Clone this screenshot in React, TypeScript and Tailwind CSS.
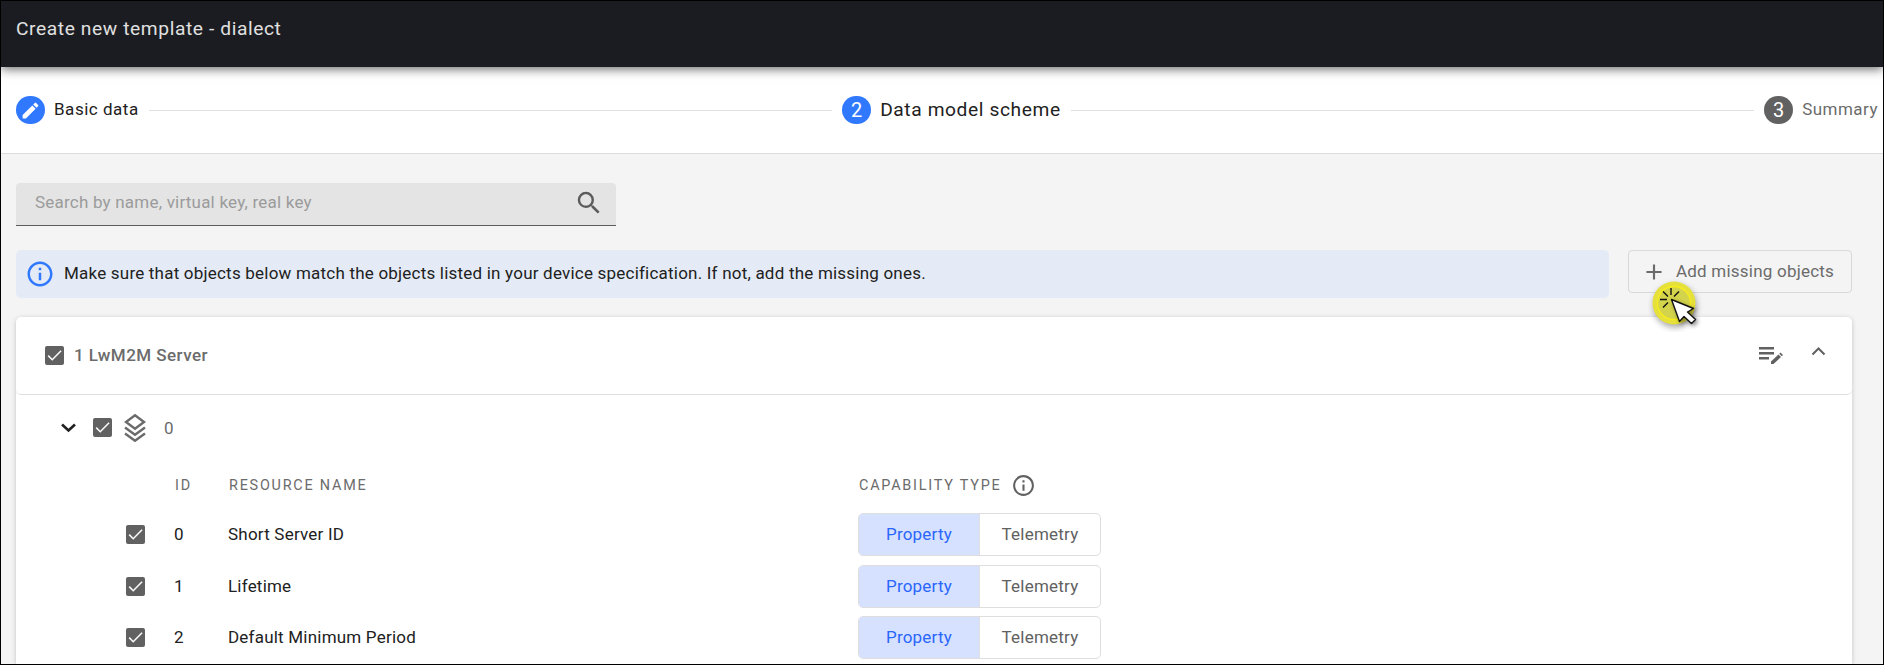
import React from "react";
import { MdEdit, MdSearch, MdOutlineInfo, MdAdd } from "react-icons/md";

function Check({ className = "" }: { className?: string }) {
  return (
    <span className={`flex size-[19px] shrink-0 items-center justify-center rounded-[2px] bg-[#616161] ${className}`}>
      <svg viewBox="0 0 24 24" className="size-[17px]" fill="none" stroke="#fafafa" strokeWidth="2.2">
        <path d="M3.1 12.2 8.8 17.9 21.3 5.3" />
      </svg>
    </span>
  );
}

function Line() {
  return <span className="mx-[10px] h-px flex-1 bg-[#e0e0e0]" />;
}

function Step({ badge, label, color, text }: { badge: React.ReactNode; label: string; color: string; text: string }) {
  return (
    <div className="flex items-center">
      <span className={`mr-[9px] flex h-[28px] w-[29px] items-center justify-center rounded-full text-[20px] leading-none text-white ${color}`}>
        {badge}
      </span>
      <span className={`whitespace-nowrap ${text}`}>{label}</span>
    </div>
  );
}

const rows = ["Short Server ID", "Lifetime", "Default Minimum Period"];

export default function App() {
  return (
    <div className="flex h-[665px] w-[1884px] flex-col overflow-hidden border border-black bg-[#f4f4f4] font-[Roboto,sans-serif] text-[#212121]">
      <header className="relative z-10 flex h-[66px] shrink-0 items-start bg-[#1b1c21] pt-[14px] pl-[15px] text-[19.2px] leading-[28px] tracking-[0.6px] text-[#e0e0e0] shadow-[0_2px_10px_rgba(0,0,0,0.6)]">
        Create new template - dialect
      </header>

      <nav className="flex h-[87px] shrink-0 items-center border-b border-[#dcdcdc] bg-white pr-[5px] pl-[15px]">
        <Step badge={<MdEdit className="size-[21px]" />} label="Basic data" color="bg-[#3079ff]" text="text-[17px] tracking-[0.52px]" />
        <Line />
        <Step badge="2" label="Data model scheme" color="bg-[#3079ff]" text="text-[19.2px] tracking-[0.6px]" />
        <Line />
        <Step badge="3" label="Summary" color="bg-[#616161]" text="text-[17px] tracking-[0.48px] text-[#6b6b6b]" />
      </nav>

      <main className="flex min-h-0 flex-1 flex-col pr-[31px] pl-[15px]">
        <div className="mt-[29px] flex h-[43px] w-[600px] shrink-0 items-center justify-between rounded-t-[4px] border-b border-[#5c5c5c] bg-[#e4e4e4] pr-[12px] pl-[19px]">
          <span className="mb-[2px] text-[17px] tracking-[0.21px] text-[#9b9b9b]">Search by name, virtual key, real key</span>
          <MdSearch className="mb-[2px] size-[30px] text-[#5c5c5c]" />
        </div>

        <div className="mt-[24px] flex shrink-0 items-start justify-between">
          <div className="flex h-[48px] w-[1593px] items-center rounded-[5px] bg-[#e4ebf6] pl-[9px]">
            <MdOutlineInfo className="mr-[9px] size-[30px] text-[#3079ff]" />
            <span className="text-[17px] tracking-[0.21px]">
              Make sure that objects below match the objects listed in your device specification. If not, add the missing ones.
            </span>
          </div>
          <div className="relative flex h-[43px] w-[224px] items-center rounded-[4px] border border-[#d9d9d9] pl-[12px] text-[17px] text-[#6b6b6b]">
            <MdAdd className="mr-[9px] size-[26px]" />
            <span className="whitespace-nowrap pt-px tracking-[0.22px]">Add missing objects</span>
            <svg className="absolute top-[25px] left-[19px] z-20" width="56" height="56" viewBox="0 0 56 56">
              <circle cx="26" cy="27" r="21.5" fill="#e6e03a" style={{ filter: "drop-shadow(1px 3px 3px rgba(0,0,0,.35))" }} />
              <circle cx="26" cy="27" r="16.5" fill="#d3d34c" stroke="#f7ec1c" strokeWidth="1.3" />
              <g stroke="#111" strokeWidth="1.4">
                <path d="M23 12v7M15 15.5l5 5M31 15.5l-5 5M12 23.5h7M15 31.5l5-5" />
              </g>
              <path d="M23.500 23.500 45.500 32.500 39.500 36 47.500 43.500 43.500 47.500 36 40.500 31.500 45.500Z" fill="white" stroke="#111" strokeWidth="1.4" strokeLinejoin="round" style={{ filter: "drop-shadow(2px 2px 2px rgba(0,0,0,.45))" }} />
            </svg>
          </div>
        </div>

        <section className="mt-[19px] flex min-h-0 flex-1 flex-col rounded-t-[5px] bg-white shadow-[0_1px_5px_rgba(0,0,0,0.2)]">
          <div className="flex h-[78px] shrink-0 items-center rounded-[5px] border-b border-[#dedede] pl-[29px]">
            <Check />
            <span className="ml-[10px] flex-1 text-[17px] font-medium tracking-[0.45px] text-[#6b6b6b]">1 LwM2M Server</span>
            <svg className="mr-[27px] size-[26px] text-[#616161]" viewBox="0 0 26 26" fill="currentColor">
              <path d="M1 4h15v2.500H1zM1 9h15v2.500H1zM1 14h10v2.500H1zM13 18.500 20.500 11.500 23 14 15.500 21H13zM21.300 10.700 22.500 9.600 25 12 23.800 13.200z" />
            </svg>
            <svg className="mr-[26px] mb-[8px] h-[9px] w-[15px] text-[#616161]" viewBox="0 0 15 9" fill="none" stroke="currentColor" strokeWidth="2">
              <path d="m1.500 7.500 6-6 6 6" />
            </svg>
          </div>

          <div className="flex h-[66px] shrink-0 items-center pl-[45px] text-[17px] text-[#6b6b6b]">
            <svg className="mr-[17px] h-[10px] w-[15px] text-[#212121]" viewBox="0 0 15 10" fill="none" stroke="currentColor" strokeWidth="2.6">
              <path d="m1 1.500 6.500 6 6.500-6" />
            </svg>
            <Check className="mb-px" />
            <svg className="mb-px ml-[12px] h-[30px] w-[22px]" viewBox="0 0 22 30" fill="none" stroke="currentColor" strokeWidth="2.4">
              <path d="M11 2.300 20 9l-9 6.700L2 9zM1 14.500l10 7.200 10-7.200M1 20.500l10 7.200 10-7.200" />
            </svg>
            <span className="ml-[18px] pt-px">0</span>
          </div>

          <div className="flex h-[48px] shrink-0 items-center text-[14.4px] tracking-[1.78px] text-[#6b6b6b]">
            <span className="ml-[159px] w-[54px] pt-px">ID</span>
            <span className="w-[630px] pt-px">RESOURCE NAME</span>
            <span className="pt-px">CAPABILITY TYPE</span>
            <MdOutlineInfo className="ml-[9px] size-[25px] text-[#616161]" />
          </div>

          {rows.map((name, id) => (
            <div key={name} className="flex h-[51.4px] shrink-0 items-center text-[17px] tracking-[0.21px]">
              <Check className="ml-[110px]" />
              <span className="ml-[29px] w-[54px] pt-px">{id}</span>
              <span className="w-[630px] pt-px">{name}</span>
              <div className="flex h-[43px] w-[243px] overflow-hidden rounded-[5px] border border-[#dedede] text-[#616161]">
                <span className="flex w-[121px] items-center justify-center border-r border-[#dedede] bg-[#d5e1ff] pt-px text-[#2b66fb]">Property</span>
                <span className="flex flex-1 items-center justify-center pt-px">Telemetry</span>
              </div>
            </div>
          ))}
        </section>
      </main>
    </div>
  );
}
